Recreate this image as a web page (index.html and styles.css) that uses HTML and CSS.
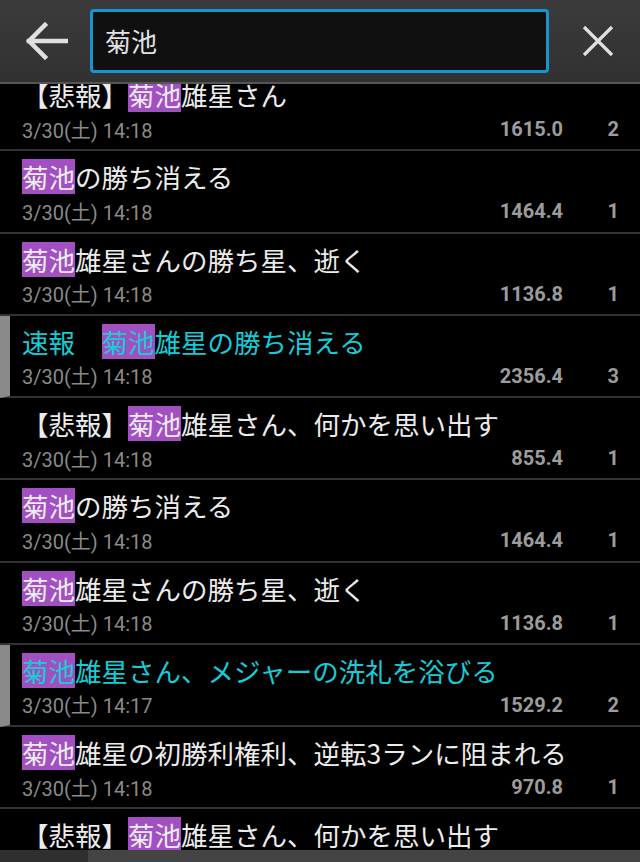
FILE: index.html
```html
<!DOCTYPE html>
<html lang="ja">
<head>
<meta charset="utf-8">
<title>検索</title>
<link rel="stylesheet" href="styles.css">
</head>
<body>
<div class="app">
  <header class="toolbar">
    <button class="icon-btn back" aria-label="戻る">
      <svg width="44" height="40" viewBox="0 0 44 40"><path d="M42 20H5M21 4L5 20l16 16" fill="none" stroke="#e0e0e0" stroke-width="4.5" stroke-linecap="square"/></svg>
    </button>
    <div class="search"><span class="search-text">菊池</span></div>
    <button class="icon-btn close" aria-label="クリア">
      <svg width="32" height="32" viewBox="0 0 32 32"><path d="M2 2L30 30M30 2L2 30" fill="none" stroke="#e0e0e0" stroke-width="3.2"/></svg>
    </button>
  </header>
  <main class="list">
    <div class="rows">
      <div class="row"><div class="title">【悲報】<span class="hl">菊池</span>雄星さん</div><div class="meta"><span class="date">3/30(土) 14:18</span><span class="score">1615.0</span><span class="count">2</span></div></div>
      <div class="row"><div class="title"><span class="hl">菊池</span>の勝ち消える</div><div class="meta"><span class="date">3/30(土) 14:18</span><span class="score">1464.4</span><span class="count">1</span></div></div>
      <div class="row"><div class="title"><span class="hl">菊池</span>雄星さんの勝ち星、逝く</div><div class="meta"><span class="date">3/30(土) 14:18</span><span class="score">1136.8</span><span class="count">1</span></div></div>
      <div class="row marked"><div class="title">速報　<span class="hl">菊池</span>雄星の勝ち消える</div><div class="meta"><span class="date">3/30(土) 14:18</span><span class="score">2356.4</span><span class="count">3</span></div></div>
      <div class="row"><div class="title">【悲報】<span class="hl">菊池</span>雄星さん、何かを思い出す</div><div class="meta"><span class="date">3/30(土) 14:18</span><span class="score">855.4</span><span class="count">1</span></div></div>
      <div class="row"><div class="title"><span class="hl">菊池</span>の勝ち消える</div><div class="meta"><span class="date">3/30(土) 14:18</span><span class="score">1464.4</span><span class="count">1</span></div></div>
      <div class="row"><div class="title"><span class="hl">菊池</span>雄星さんの勝ち星、逝く</div><div class="meta"><span class="date">3/30(土) 14:18</span><span class="score">1136.8</span><span class="count">1</span></div></div>
      <div class="row marked"><div class="title"><span class="hl">菊池</span>雄星さん、メジャーの洗礼を浴びる</div><div class="meta"><span class="date">3/30(土) 14:17</span><span class="score">1529.2</span><span class="count">2</span></div></div>
      <div class="row"><div class="title"><span class="hl">菊池</span>雄星の初勝利権利、逆転3ランに阻まれる</div><div class="meta"><span class="date">3/30(土) 14:18</span><span class="score">970.8</span><span class="count">1</span></div></div>
      <div class="row"><div class="title">【悲報】<span class="hl">菊池</span>雄星さん、何かを思い出す</div><div class="meta"><span class="date">3/30(土) 14:18</span><span class="score">855.4</span><span class="count">1</span></div></div>
    </div>
  </main>
  <footer class="bottom"><div class="bottom-left"></div></footer>
</div>
</body>
</html>
```

FILE: styles.css
```css
* { box-sizing: border-box; }
html, body { margin: 0; padding: 0; background: #000; }
body { font-family: "Noto Sans CJK JP", "Noto Sans", sans-serif; }
.app { width: 640px; height: 862px; display: flex; flex-direction: column; overflow: hidden; }
.toolbar {
  height: 84px; flex: none;
  background: linear-gradient(#3b3b3b, #313131);
  border-bottom: 2px solid #555;
  display: flex; align-items: center;
}
.icon-btn { background: none; border: 0; padding: 0; display: flex; align-items: center; justify-content: center; flex: none; }
.back { width: 90px; height: 82px; padding-left: 2px; }
.close { width: 91px; height: 82px; padding-left: 6px; }
.search {
  flex: none;
  width: 459px; height: 64px; margin-top: -1px;
  border: 3px solid #1596cf; border-radius: 4px;
  background: #101010;
  display: flex; align-items: center; padding-left: 12px;
}
.search-text { color: #e2e2e2; font-size: 26px; line-height: 1; }
.list { flex: 1; overflow: hidden; }
.rows { margin-top: -15px; }
.row {
  height: 82.25px;
  border-bottom: 2px solid #333;
  padding: 8px 22px 0 22px;
  display: flex; flex-direction: column;
}
.row.marked { border-left: 10px solid #8a8a8a; padding-left: 12px; }
.title {
  font-size: 26.5px; line-height: 35px; height: 35px; color: #ececec;
  white-space: nowrap;
}
.row.marked .title { color: #17ccd6; }
.hl { background: #a24fc2; display: inline-block; line-height: 35px; }
.meta {
  display: flex; align-items: center; height: 24px; margin-top: 5px;
  font-family: Roboto, "Noto Sans CJK JP", sans-serif; font-size: 20px;
}
.date { color: #8a8a8a; flex: 1; }
.score { color: #9c9c9c; font-weight: 700; width: 120px; text-align: right; }
.count { color: #9c9c9c; font-weight: 700; width: 56px; text-align: right; margin-right: -1px; }
.bottom { height: 12px; flex: none; background: #444; display: flex; }
.bottom-left { width: 88px; background: #2f2f2f; }
```
